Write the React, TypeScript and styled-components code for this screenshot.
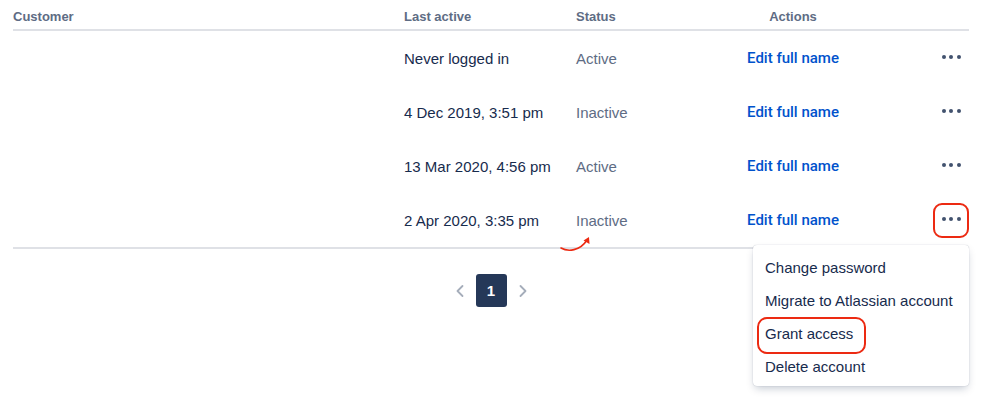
import React from "react";
import styled, { createGlobalStyle } from "styled-components";
import { ChevronLeft, ChevronRight } from "lucide-react";

const Global = createGlobalStyle`
  html, body { margin: 0; padding: 0; background: #ffffff; }
  body { font-family: "Liberation Sans", Arial, sans-serif; color: #172b4d; }
  * { box-sizing: border-box; }
`;

const Page = styled.div`
  width: 999px;
  height: 397px;
  padding: 0 30px 0 13px;
  overflow: hidden;
`;

const Table = styled.div`
  display: flex;
  flex-direction: column;
  border-bottom: 2px solid #dfe1e6;
`;

const COLS = "391px 172px 130px 174px 1fr";

const HeaderRow = styled.div`
  display: grid;
  grid-template-columns: ${COLS};
  height: 31px;
  padding-top: 3px;
  align-items: center;
  border-bottom: 2px solid #dfe1e6;
`;

const HeadCell = styled.div<{ $center?: boolean }>`
  font-size: 13px;
  font-weight: 700;
  color: #5e6c84;
  text-align: ${(p) => (p.$center ? "center" : "left")};
`;

const Row = styled.div`
  display: grid;
  grid-template-columns: ${COLS};
  height: 54px;
  align-items: center;
`;

const Cell = styled.div<{ $muted?: boolean }>`
  position: relative;
  font-size: 15px;
  color: ${(p) => (p.$muted ? "#5e6c84" : "#172b4d")};
  white-space: nowrap;
`;

const ActionCell = styled.div`
  display: flex;
  justify-content: center;
`;

const LinkButton = styled.a`
  font-family: Roboto, "Liberation Sans", Arial, sans-serif;
  font-size: 15px;
  font-weight: 500;
  color: #0052cc;
  text-decoration: none;
`;

const MoreCell = styled.div`
  display: flex;
  justify-content: flex-end;
`;

const MoreWrap = styled.div`
  position: relative;
`;

const MoreButton = styled.button<{ $marked?: boolean }>`
  width: 36px;
  height: 35px;
  display: flex;
  align-items: center;
  justify-content: center;
  gap: 3.5px;
  padding: 0 0 2px 0;
  background: transparent;
  border: 2px solid ${(p) => (p.$marked ? "#ec2a12" : "transparent")};
  border-radius: 9px;
  cursor: pointer;
`;

const Dot = styled.span`
  width: 4px;
  height: 4px;
  border-radius: 50%;
  background: #42526e;
`;

const Menu = styled.div`
  position: absolute;
  top: calc(100% + 7px);
  right: 0;
  width: 216px;
  padding: 6px 0 3px;
  background: #ffffff;
  border-radius: 4px;
  box-shadow: 0 4px 8px -2px rgba(9, 30, 66, 0.25), 0 0 1px rgba(9, 30, 66, 0.31);
  z-index: 10;
`;

const MenuItem = styled.div<{ $marked?: boolean }>`
  position: relative;
  height: 33px;
  display: flex;
  align-items: center;
  padding-left: 12px;
  font-size: 15px;
  color: #172b4d;
  white-space: nowrap;
  &::after {
    content: "";
    display: ${(p) => (p.$marked ? "block" : "none")};
    position: absolute;
    left: 4px;
    top: 0;
    width: 105px;
    height: 33px;
    border: 2px solid #ec2a12;
    border-radius: 10px;
  }
`;

const Arrow = styled.svg`
  position: absolute;
  left: -16px;
  top: 25px;
  overflow: visible;
`;

const Pagination = styled.nav`
  display: flex;
  justify-content: center;
  align-items: center;
  gap: 4px;
  margin-top: 25px;
`;

const NavButton = styled.button`
  width: 24px;
  height: 32px;
  display: flex;
  align-items: center;
  justify-content: center;
  padding: 0;
  border: none;
  background: transparent;
  color: #a5adba;
`;

const PageButton = styled.button`
  width: 31px;
  height: 33px;
  border: none;
  border-radius: 3px;
  background: #253858;
  color: #ffffff;
  font-family: "Liberation Sans", Arial, sans-serif;
  font-size: 15px;
  font-weight: 700;
  padding: 0;
`;

const rows = [
  { last: "Never logged in", status: "Active" },
  { last: "4 Dec 2019, 3:51 pm", status: "Inactive" },
  { last: "13 Mar 2020, 4:56 pm", status: "Active" },
  { last: "2 Apr 2020, 3:35 pm", status: "Inactive" },
];

const menuItems = [
  "Change password",
  "Migrate to Atlassian account",
  "Grant access",
  "Delete account",
];

export default function App() {
  return (
    <>
      <Global />
      <Page>
        <Table>
          <HeaderRow>
            <HeadCell>Customer</HeadCell>
            <HeadCell>Last active</HeadCell>
            <HeadCell>Status</HeadCell>
            <HeadCell $center>Actions</HeadCell>
            <HeadCell />
          </HeaderRow>
          {rows.map((r, i) => {
            const last = i === rows.length - 1;
            return (
              <Row key={i}>
                <Cell />
                <Cell>{r.last}</Cell>
                <Cell $muted>
                  {r.status}
                  {last && (
                    <Arrow width="30" height="14" viewBox="0 0 30 14">
                      <path
                        d="M1 11 C 8 15, 20 14, 27 3"
                        fill="none"
                        stroke="#ec2a12"
                        strokeWidth="1.6"
                        strokeLinecap="round"
                      />
                      <path d="M29 0 L 29.5 7 L 23.5 3.5 Z" fill="#ec2a12" />
                    </Arrow>
                  )}
                </Cell>
                <ActionCell>
                  <LinkButton href="#">Edit full name</LinkButton>
                </ActionCell>
                <MoreCell>
                  <MoreWrap>
                    <MoreButton $marked={last}>
                      <Dot />
                      <Dot />
                      <Dot />
                    </MoreButton>
                    {last && (
                      <Menu>
                        {menuItems.map((m) => (
                          <MenuItem key={m} $marked={m === "Grant access"}>
                            {m}
                          </MenuItem>
                        ))}
                      </Menu>
                    )}
                  </MoreWrap>
                </MoreCell>
              </Row>
            );
          })}
        </Table>
        <Pagination>
          <NavButton>
            <ChevronLeft size={20} strokeWidth={2.2} />
          </NavButton>
          <PageButton>1</PageButton>
          <NavButton>
            <ChevronRight size={20} strokeWidth={2.2} />
          </NavButton>
        </Pagination>
      </Page>
    </>
  );
}
